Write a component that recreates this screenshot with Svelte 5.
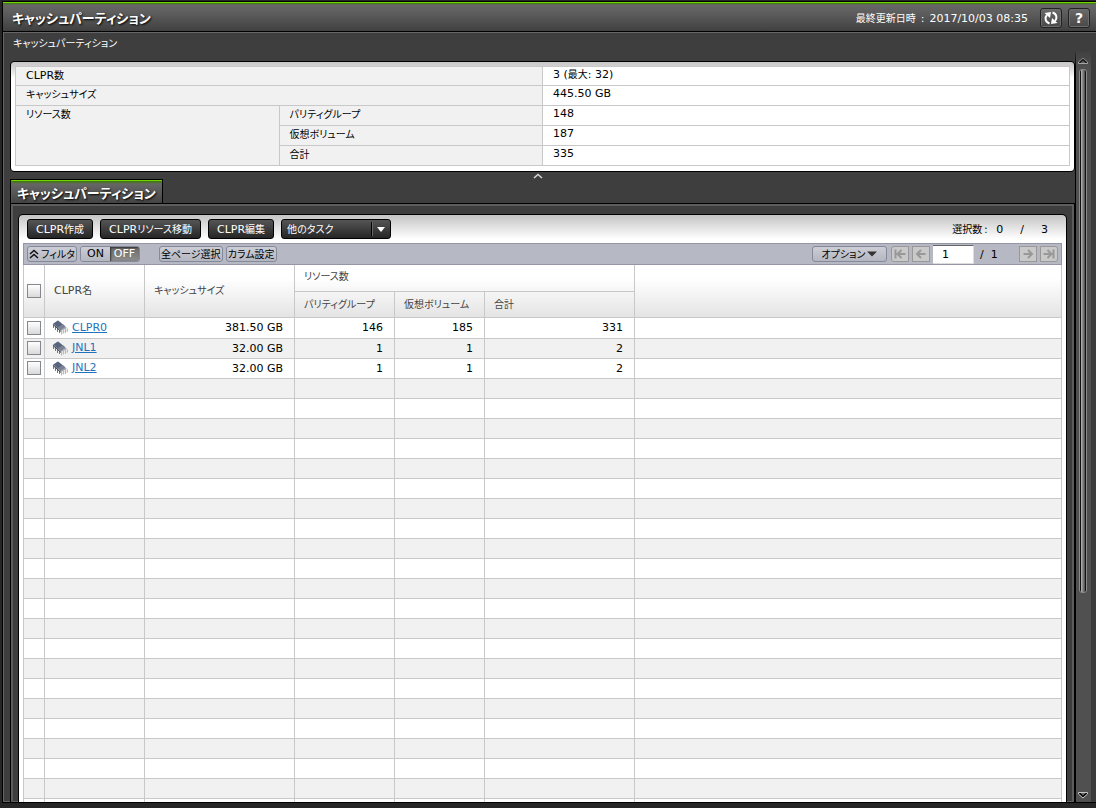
<script>
  const title = 'キャッシュパーティション';
  const rows = [
    { name: 'CLPR0', size: '381.50 GB', parity: 146, volumes: 185, total: 331 },
    { name: 'JNL1', size: '32.00 GB', parity: 1, volumes: 1, total: 2 },
    { name: 'JNL2', size: '32.00 GB', parity: 1, volumes: 1, total: 2 }
  ];
  const blanks = Array.from({ length: 60 });
</script>

<div class="app">
  <div class="window">
    <header class="titlebar">
      <h1>{title}</h1>
      <div class="status">
        <span class="updated"><span>最終更新日時</span><span class="latin">:</span><span class="latin">2017/10/03 08:35</span></span>
        <button class="tool" aria-label="更新">
          <svg width="16" height="14" viewBox="0 0 16 14" fill="none" stroke="#fff" stroke-width="2">
            <path d="M6.500 12.500 C1.500 11 2 6 4 4" />
            <path d="M1.500 2 L8 1 L7 7Z" fill="#fff" stroke="none" />
            <path d="M9.500 1.500 C14.500 3 14 8 12 10" />
            <path d="M14.500 12 L8 13 L9 7Z" fill="#fff" stroke="none" />
          </svg>
        </button>
        <button class="tool" aria-label="ヘルプ">?</button>
      </div>
    </header>

    <div class="body">
      <main>
        <nav class="crumb">{title}</nav>

        <section class="summary">
          <table>
            <colgroup><col class="quarter" /><col class="quarter" /><col /></colgroup>
            <tbody>
              <tr class="lead"><th colspan="2"><span class="latin">CLPR</span>数</th><td>3 (<span class="jp">最大</span>: 32)</td></tr>
              <tr><th colspan="2">キャッシュサイズ</th><td>445.50 GB</td></tr>
              <tr><th rowspan="3">リソース数</th><th>パリティグループ</th><td>148</td></tr>
              <tr><th>仮想ボリューム</th><td>187</td></tr>
              <tr><th>合計</th><td>335</td></tr>
            </tbody>
          </table>
        </section>

        <button class="collapse" aria-label="折りたたむ">
          <svg width="10" height="6" viewBox="0 0 10 6"><path d="M1 5 L5 1.500 L9 5" fill="none" stroke="#d6d6d6" stroke-width="1.500" /></svg>
        </button>

        <div class="tabs"><button class="tab">{title}</button></div>

        <section class="pane">
          <div class="sheet">
            <div class="actions">
              <button class="dark"><span class="latin">CLPR</span>作成</button>
              <button class="dark"><span class="latin">CLPR</span>リソース移動</button>
              <button class="dark"><span class="latin">CLPR</span>編集</button>
              <div class="task">
                <select aria-label="他のタスク"><option>他のタスク</option></select>
                <svg width="20" height="14" viewBox="0 0 20 14"><path d="M0.500 0V14" stroke="#000" /><path d="M1.500 0V14" stroke="#666" /><path d="M6 5h8l-4 5z" fill="#fff" /></svg>
              </div>
              <div class="selected">
                <span>選択数 :</span><span class="latin">0</span><span class="latin">/</span><span class="latin">3</span>
              </div>
            </div>

            <div class="toolbar">
              <button class="light filter">
                <svg width="10" height="10" viewBox="0 0 10 10" fill="none" stroke="#111" stroke-width="1.500"><path d="M1 5 L5 1.500 L9 5M1 9 L5 5.500 L9 9" /></svg>
                フィルタ
              </button>
              <div class="switch">
                <button class="latin">ON</button><button class="latin off">OFF</button>
              </div>
              <button class="light">全ページ選択</button>
              <button class="light">カラム設定</button>
              <div class="pager">
                <button class="light options">オプション
                  <svg width="10" height="6" viewBox="0 0 10 6"><path d="M0 0.500h10l-5 5z" fill="#333" /></svg>
                </button>
                <button class="page first" disabled aria-label="最初のページ">
                  <svg width="12" height="10" viewBox="0 0 12 10"><path d="M1.500 0.500V9.500M11.500 5H4M7.500 1 L3.500 5 L7.500 9" /></svg>
                </button>
                <button class="page" disabled aria-label="前のページ">
                  <svg width="12" height="10" viewBox="0 0 12 10"><path d="M10.500 5H2.500M6 1 L2 5 L6 9" /></svg>
                </button>
                <input class="number latin" type="text" value="1" aria-label="ページ番号" />
                <span class="latin pages">/&nbsp; 1</span>
                <button class="page" disabled aria-label="次のページ">
                  <svg width="12" height="10" viewBox="0 0 12 10"><path d="M1.500 5H9.500M6 1 L10 5 L6 9" /></svg>
                </button>
                <button class="page last" disabled aria-label="最後のページ">
                  <svg width="12" height="10" viewBox="0 0 12 10"><path d="M10.500 0.500V9.500M0.500 5H8M4.500 1 L8.500 5 L4.500 9" /></svg>
                </button>
              </div>
            </div>

            <table class="grid">
              <colgroup>
                <col class="c-check" /><col class="c-name" /><col class="c-size" /><col class="c-name" /><col class="c-vol" /><col class="c-size" /><col />
              </colgroup>
              <thead>
                <tr>
                  <th rowspan="2" class="check"><input type="checkbox" aria-label="すべて選択" /></th>
                  <th rowspan="2" class="tall"><span class="latin">CLPR</span>名</th>
                  <th rowspan="2" class="tall">キャッシュサイズ</th>
                  <th colspan="3" class="group">リソース数</th>
                  <th rowspan="2"></th>
                </tr>
                <tr>
                  <th class="sub">パリティグループ</th>
                  <th class="sub">仮想ボリューム</th>
                  <th class="sub">合計</th>
                </tr>
              </thead>
              <tbody>
                {#each rows as row}
                  <tr>
                    <td class="check"><input type="checkbox" aria-label={row.name} /></td>
                    <td class="name">
                      <div>
                        <svg width="17" height="15" viewBox="0 0 17 15">
                          <path d="M1.500 4v4M3.500 6v4M5.500 8v4M7.500 10v3" stroke="#777" />
                          <path d="M0.500 4 L6 0.500 L15 8 L9 11z" fill="#a2a5ad" />
                          <path d="M1.500 3.500 L6 0.500 L11 4.500 L6 8z" fill="#59657f" />
                          <path d="M5.500 7.500 L11 4 L13.500 6.500 L8.500 10z" fill="#7b8293" />
                          <path d="M1 4.500 L9 11.500" stroke="#3d4455" />
                          <path d="M9.500 10.500v4M11.500 9.500v4M13.500 9v4M15.500 8.500v3" stroke="#b9b9b9" />
                          <path d="M10.500 10.500v3M12.500 9.500v3M14.500 9v3" stroke="#e6e6e6" />
                        </svg>
                        <a href="#{row.name}">{row.name}</a>
                      </div>
                    </td>
                    <td>{row.size}</td>
                    <td>{row.parity}</td>
                    <td>{row.volumes}</td>
                    <td>{row.total}</td>
                    <td></td>
                  </tr>
                {/each}
                {#each blanks as _}
                  <tr><td></td><td></td><td></td><td></td><td></td><td></td><td></td></tr>
                {/each}
              </tbody>
            </table>
          </div>
        </section>
      </main>

      <div class="scroll">
        <svg width="10" height="8" viewBox="0 0 10 8"><path d="M0.500 6.500 V5 L5 1 L9.500 5 V6.500z" fill="#111" stroke="#c4c4c4" /><path d="M3 6.500 L5 4.500 L7 6.500" fill="none" stroke="#c4c4c4" /></svg>
        <div class="track"><div class="thumb"></div></div>
        <svg width="10" height="8" viewBox="0 0 10 8"><path d="M0.500 1.500 V3 L5 7 L9.500 3 V1.500z" fill="#111" stroke="#c4c4c4" /><path d="M3 1.500 L5 3.500 L7 1.500" fill="none" stroke="#c4c4c4" /></svg>
      </div>
    </div>
  </div>
</div>

<style>
  :global(body) { background: #262626; }
  * { box-sizing: border-box; }
  .app {
    height: 100vh;
    padding: 1px 0 5px 2px;
    font: 10px/16px "Noto Sans CJK JP", sans-serif;
    font-feature-settings: "palt";
    color: #000;
  }
  button, input, select { font: inherit; font-feature-settings: inherit; margin: 0; padding: 0; color: inherit; }
  .latin, td { font-family: "DejaVu Sans", "Noto Sans CJK JP", sans-serif; font-size: 11px; }
  span.latin { line-height: 1; }
  .jp { font-family: "Noto Sans CJK JP", sans-serif; font-size: 10px; line-height: 1; }

  .window {
    height: 100%;
    display: flex;
    flex-direction: column;
    border: 1px solid #000;
    border-right: 0;
    background: #3e3e3e;
    box-shadow: inset 1px -1px #666;
    overflow: hidden;
  }
  .titlebar {
    flex: none;
    display: flex;
    align-items: center;
    justify-content: space-between;
    height: 30px;
    padding: 2px 6px 0 9px;
    border-top: 1px solid #72d600;
    border-bottom: 1px solid #000;
    background: linear-gradient(#3c7a08, #666 2px, #606060 8px, #404040);
    box-shadow: 0 1px #666;
    color: #fff;
  }
  h1 { margin: 0; font-size: 13px; line-height: 20px; font-weight: 700; text-shadow: 1px 1px 2px #000; }
  .status { display: flex; align-items: center; gap: 6px; }
  .updated { display: flex; align-items: center; gap: 5px; margin-right: 6px; }
  .tool {
    display: flex;
    align-items: center;
    justify-content: center;
    width: 22px;
    height: 20px;
    border: 1px solid #222;
    border-radius: 3px;
    background: linear-gradient(#6a6a6a, #484848);
    box-shadow: inset 0 0 0 1px #6d6d6d;
    font: bold 14px/18px "DejaVu Sans", sans-serif;
    color: #fff;
  }

  .body { flex: 1; min-height: 0; display: flex; }
  main { flex: 1; min-width: 0; display: flex; flex-direction: column; padding-left: 7px; overflow: hidden; }
  .crumb { flex: none; height: 29px; padding: 3px 3px 0; color: #fff; }

  .summary {
    flex: none;
    padding: 4px;
    padding-bottom: 5px;
    border: 1px solid #000;
    border-radius: 4px;
    background: linear-gradient(#c9c9c9, #d2cfd0 4px, #fff 16px);
  }
  table { width: 100%; table-layout: fixed; border-collapse: collapse; }
  .quarter { width: 25%; }
  .summary th, .summary td {
    height: 20px;
    padding: 0 10px;
    border: 1px solid #c8c8c8;
    font-weight: 400;
    line-height: 16px;
    text-align: left;
    vertical-align: top;
    background: #f1f1f1;
  }
  .summary td { background: #fff; }
  .summary .lead > * { height: 19px; }
  .collapse { flex: none; align-self: center; display: block; height: 7px; margin-right: 10px; border: 0; background: none; line-height: 0; }

  .tabs { flex: none; display: flex; }
  .tab {
    height: 24px;
    padding: 3px 6px 0;
    border: 1px solid #000;
    border-bottom: 0;
    background: linear-gradient(#72d600 1px, #3c7a08 1px, #666 4px, #444);
    box-shadow: inset 1px 0 #6665;
    color: #fff;
    font-size: 13px;
    font-weight: 700;
    text-shadow: 1px 1px 2px #000;
  }
  .pane {
    flex: 1;
    min-height: 0;
    display: flex;
    padding: 10px 7px 0;
    border: 1px solid #000;
    border-bottom: 0;
    box-shadow: inset 2px 2px #5d5d5d, inset -2px 0 #5d5d5d;
    overflow: hidden;
  }
  .sheet {
    flex: 1;
    min-width: 0;
    padding: 0 4px;
    border: 1px solid #000;
    border-bottom: 0;
    border-radius: 5px 5px 0 0;
    background: linear-gradient(#c4c4c4, #fff 24px);
    overflow: hidden;
  }

  .actions { display: flex; gap: 7px; height: 28px; padding: 4px 4px 0; }
  .dark, .task select {
    height: 20px;
    padding: 0 8px;
    border: 1px solid #000;
    border-radius: 3px;
    background: linear-gradient(#555, #262626);
    color: #fff;
    line-height: 16px;
    white-space: nowrap;
  }
  .task { display: grid; width: 110px; }
  .task > * { grid-area: 1 / 1; }
  .task select { appearance: none; width: 100%; padding: 0 5px; }
  .task svg { justify-self: end; margin-top: 3px; pointer-events: none; }
  .selected { display: flex; align-items: center; gap: 17px; height: 20px; margin-left: auto; padding-right: 10px; }
  .selected span:first-child { margin-right: -8px; }

  .toolbar {
    display: flex;
    align-items: center;
    gap: 3px;
    height: 22px;
    padding: 0 3px;
    border: 1px solid #9496a6;
    background: #b6b8c3;
  }
  .light {
    display: flex;
    align-items: center;
    justify-content: center;
    gap: 2px;
    height: 16px;
    padding: 0 1px;
    border: 1px solid #84899c;
    border-radius: 3px;
    background: linear-gradient(#cdced6, #b4b6c1);
    line-height: 14px;
    white-space: nowrap;
  }
  .filter { width: 50px; }
  .switch { display: flex; height: 16px; margin-right: 16px; border: 1px solid #84899c; border-radius: 3px; overflow: hidden; }
  .switch button { width: 29px; border: 0; background: linear-gradient(#cdced6, #b4b6c1); line-height: 14px; }
  .switch .off { background: linear-gradient(#6c6c6c, #8c8c8c); color: #fff; box-shadow: inset 1px 1px 2px #333; }
  .pager { display: flex; align-items: center; gap: 3px; margin-left: auto; }
  .options { width: 75px; margin-right: 1px; }
  .page {
    display: flex;
    align-items: center;
    justify-content: center;
    width: 18px;
    height: 16px;
    border: 1px solid #989898;
    background: #c9c9c9;
  }
  .page path { fill: none; stroke: #989898; stroke-width: 2; }
  .first { border-radius: 3px 0 0 3px; }
  .last { border-radius: 0 3px 3px 0; }
  .number { width: 41px; height: 19px; padding: 0 9px; border: 1px solid #ddd; border-top-color: #666; border-left: 0; background: #fff; }
  .pages { width: 39px; padding-left: 3px; }

  .grid { color: #000; background: #fff; }
  .c-check { width: 21px; }
  .c-name { width: 100px; }
  .c-size { width: 150px; }
  .c-vol { width: 90px; }
  thead { background: linear-gradient(#fff 25%, #e4e4e4); }
  .grid th, .grid td { border: 1px solid #c8c8c8; }
  .grid thead tr:first-child th { border-top: 0; }
  .grid th { height: 26px; padding: 0 9px; font-weight: 400; line-height: 16px; text-align: left; color: #444; white-space: nowrap; }
  .grid .tall { padding-bottom: 2px; }
  .grid .group { padding-bottom: 4px; }
  .grid td { height: 20px; padding: 1px 11px 0; line-height: 16px; text-align: right; }
  .grid tbody tr:first-child td { height: 21px; }
  .grid tbody tr:nth-child(even) { background: #f1f1f1; }
  .grid .check { padding: 0; text-align: center; }
  .check input {
    appearance: none;
    display: block;
    width: 14px;
    height: 14px;
    margin: 0 auto;
    border: 1px solid #84888c;
    background: linear-gradient(#fff, #d9d9d9);
  }
  .grid .name { padding: 0 7px; }
  .name div { display: flex; align-items: center; gap: 3px; }
  .name svg { flex: none; }
  a { color: #1f73bd; text-decoration: underline; text-underline-offset: 1px; }

  .scroll {
    flex: none;
    display: flex;
    flex-direction: column;
    align-items: center;
    gap: 4px;
    width: 21px;
    margin-top: 20px;
    padding: 5px 5px 3px 0;
    background: linear-gradient(90deg, #000 1px, #505050 1px 16px, #3c3c3c 16px);
    mask-image: linear-gradient(#0003, #000 16px);
  }
  .scroll > svg { flex: none; mask: none; }
  .track { flex: 1; display: flex; width: 8px; }
  .thumb {
    width: 8px;
    height: 73%;
    border: 1px solid #8a8a8a;
    border-radius: 3px;
    background: linear-gradient(90deg, #111 1px, #b5b5b5 1px, #4a4a4a 5px, #111 5px);
  }
</style>
